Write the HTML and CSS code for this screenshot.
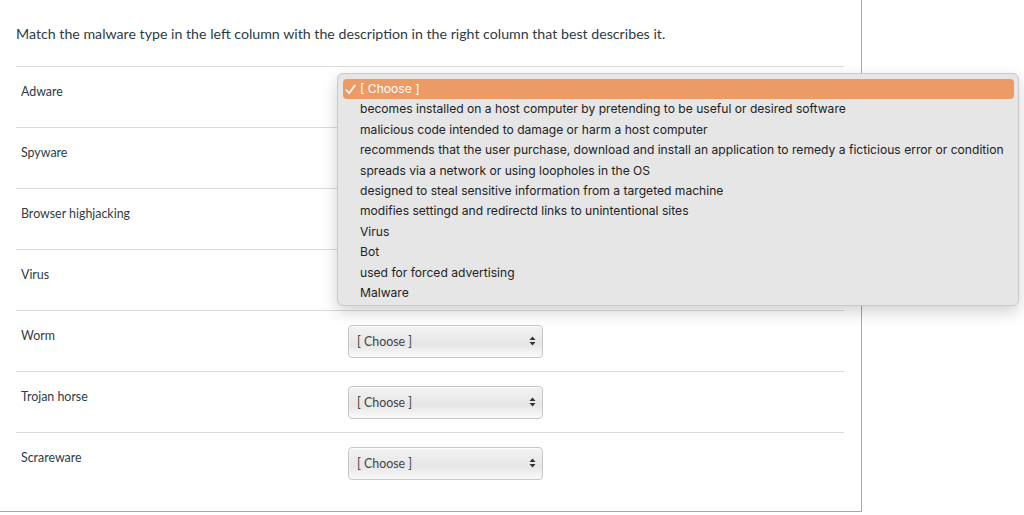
FILE: index.html
```html
<!DOCTYPE html>
<html>
<head>
<meta charset="utf-8">
<link rel="stylesheet" href="styles.css">
</head>
<body>
<div class="panel">
  <div class="question">Match the malware type in the left column with the description in the right column that best describes it.</div>
  <div class="rows">
    <div class="row"><div class="label">Adware</div><div class="select covered"></div></div>
    <div class="row"><div class="label">Spyware</div><div class="select covered"></div></div>
    <div class="row"><div class="label">Browser highjacking</div><div class="select covered"></div></div>
    <div class="row"><div class="label">Virus</div><div class="select covered"></div></div>
    <div class="row"><div class="label">Worm</div><div class="select"><span>[ Choose ]</span><svg class="arr" width="7" height="10" viewBox="0 0 7 10"><path d="M3.5 0.5 L6.5 4 H0.5Z M3.5 9.5 L6.5 6 H0.5Z" fill="#333"/></svg></div></div>
    <div class="row"><div class="label">Trojan horse</div><div class="select"><span>[ Choose ]</span><svg class="arr" width="7" height="10" viewBox="0 0 7 10"><path d="M3.5 0.5 L6.5 4 H0.5Z M3.5 9.5 L6.5 6 H0.5Z" fill="#333"/></svg></div></div>
    <div class="row"><div class="label">Scrareware</div><div class="select"><span>[ Choose ]</span><svg class="arr" width="7" height="10" viewBox="0 0 7 10"><path d="M3.5 0.5 L6.5 4 H0.5Z M3.5 9.5 L6.5 6 H0.5Z" fill="#333"/></svg></div></div>
  </div>
</div>
<div class="menu">
  <div class="item selected"><svg class="check" width="11" height="11" viewBox="0 0 11 11"><path d="M1.2 6 L4.2 9.3 L9.8 1.5" fill="none" stroke="#fff" stroke-width="1.6" stroke-linecap="round" stroke-linejoin="round"/></svg>[ Choose ]</div>
  <div class="item">becomes installed on a host computer by pretending to be useful or desired software</div>
  <div class="item">malicious code intended to damage or harm a host computer</div>
  <div class="item">recommends that the user purchase, download and install an application to remedy a ficticious error or condition</div>
  <div class="item">spreads via a network or using loopholes in the OS</div>
  <div class="item">designed to steal sensitive information from a targeted machine</div>
  <div class="item">modifies settingd and redirectd links to unintentional sites</div>
  <div class="item">Virus</div>
  <div class="item">Bot</div>
  <div class="item">used for forced advertising</div>
  <div class="item">Malware</div>
</div>
</body>
</html>
```

FILE: styles.css
```css
html, body {
  margin: 0;
  padding: 0;
  background: #fff;
}
body {
  font-family: Lato, "Liberation Sans", sans-serif;
  color: #2d3b45;
  width: 1024px;
  height: 515px;
  overflow: hidden;
}
.panel {
  width: 862px;
  height: 512px;
  border-right: 1px solid #a8a8a8;
  border-bottom: 1px solid #a8a8a8;
  box-sizing: border-box;
}
.question {
  font-size: 14.2px;
  line-height: 20px;
  padding: 24px 16px 22px;
  height: 66px;
  box-sizing: border-box;
}
.rows {
  margin: 0 17px 0 16px;
}
.row {
  display: grid;
  grid-template-columns: 332px 195px;
  align-items: center;
  height: 61px;
  border-top: 1px solid #dcdcdc;
  box-sizing: border-box;
}
.label {
  align-self: start;
  font-size: 12.4px;
  line-height: 18px;
  padding: 16px 0 0 5px;
}
.select {
  height: 33px;
  box-sizing: border-box;
  border: 1px solid #c7c7c7;
  border-radius: 4px;
  background: linear-gradient(#f3f3f3, #e6e6e6 60%, #fafafa);
  box-shadow: inset 0 1px 1px rgba(255,255,255,0.8);
  display: flex;
  align-items: center;
  justify-content: space-between;
  padding: 0 6px 0 8px;
  font-size: 12.4px;
  color: #444;
}
.arr {
  display: block;
}
.menu {
  position: absolute;
  left: 337px;
  top: 73px;
  width: 682px;
  height: 233px;
  box-sizing: border-box;
  padding: 5px 4px 0 5px;
  background: #e6e6e6;
  border: 1px solid #c9c9c9;
  border-radius: 6px;
  box-shadow: 0 6px 16px rgba(0,0,0,0.18);
  font-family: Inter, "Liberation Sans", sans-serif;
  font-size: 12.1px;
  color: #222;
}
.item {
  height: 20.4px;
  line-height: 20.4px;
  padding-left: 17px;
  white-space: nowrap;
  position: relative;
}
.item.selected {
  background: #ec9a66;
  color: #fff;
  border-radius: 4px;
}
.check {
  position: absolute;
  left: 2px;
  top: 4.5px;
}
```
